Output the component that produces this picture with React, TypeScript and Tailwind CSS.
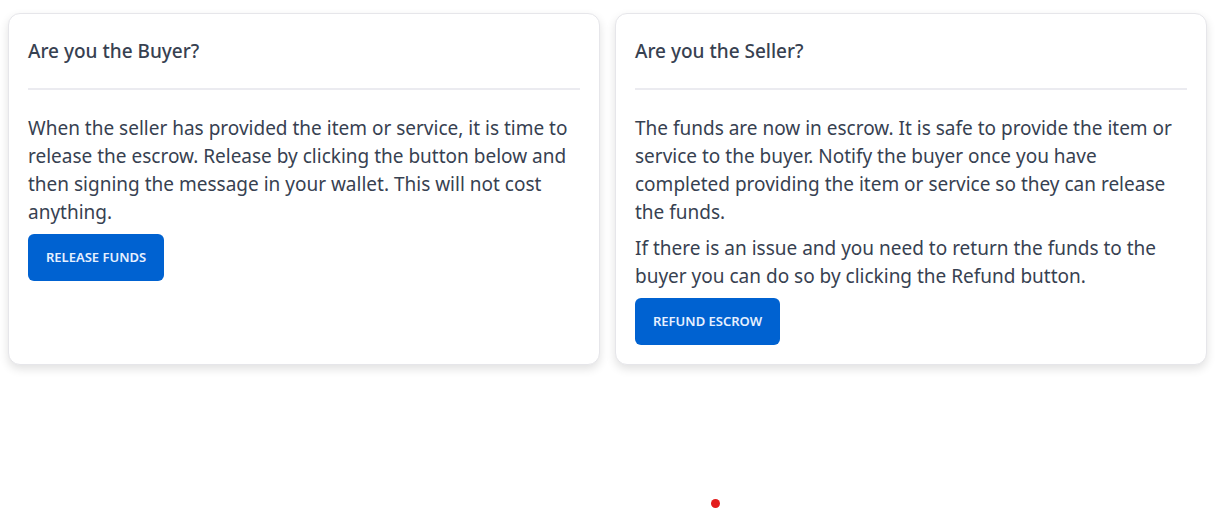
const font = { fontFamily: '"Noto Sans", "Open Sans", sans-serif' };

interface RoleCardProps {
  title: string;
  paragraphs: string[];
  action: string;
}

function RoleCard({ title, paragraphs, action }: RoleCardProps) {
  return (
    <div className="flex flex-col rounded-xl border border-[#e6e6ea] bg-white px-[19px] pb-[19px] shadow-[0_4px_10px_rgba(0,0,0,0.12)]">
      <div className="flex h-[74px] items-center">
        <h2 className="text-[19px] font-medium text-[#374151]">{title}</h2>
      </div>
      <div className="h-[2px] bg-[#ebebf0]" />
      <div className="pt-6">
        {paragraphs.map((p, i) => (
          <p key={i} className="mb-2 text-[19px] leading-[28px] text-[#374151]">
            {p}
          </p>
        ))}
        <button className="h-[47px] rounded-md bg-[#0062d1] px-[18px] text-[13px] font-semibold uppercase text-[#e6f0ff]">
          {action}
        </button>
      </div>
    </div>
  );
}

export default function App() {
  return (
    <div className="relative h-[510px] w-full bg-white" style={font}>
      <div className="grid grid-cols-2 gap-[15px] px-2 pt-[13px]">
        <RoleCard
          title="Are you the Buyer?"
          paragraphs={[
            'When the seller has provided the item or service, it is time to release the escrow. Release by clicking the button below and then signing the message in your wallet. This will not cost anything.',
          ]}
          action="Release Funds"
        />
        <RoleCard
          title="Are you the Seller?"
          paragraphs={[
            'The funds are now in escrow. It is safe to provide the item or service to the buyer. Notify the buyer once you have completed providing the item or service so they can release the funds.',
            'If there is an issue and you need to return the funds to the buyer you can do so by clicking the Refund button.',
          ]}
          action="Refund Escrow"
        />
      </div>
      <div className="absolute left-[711px] top-[499px] h-[9px] w-[9px] rounded-full bg-[#e31c1c]" />
    </div>
  );
}
